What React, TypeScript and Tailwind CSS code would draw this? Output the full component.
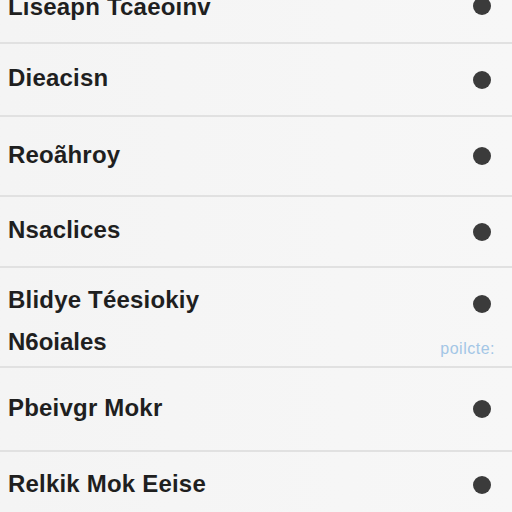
const ROWS = [
  { label: "Liseapn Tcaeoinv", h: "h-[74px]" },
  { label: "Dieacisn", h: "h-[73px]" },
  { label: "Reoãhroy", h: "h-[80px]" },
  { label: "Nsaclices", h: "h-[71px]" },
  { label: "Blidye Téesiokiy", sub: "N6oiales", note: "poilcte:", h: "h-[100px]" },
  { label: "Pbeivgr Mokr", h: "h-[84px]" },
  { label: "Relkik Mok Eeise", h: "h-[66px]" },
];

function Dot() {
  return <span className="block w-[18px] h-[18px] rounded-full bg-[#3b3b3b]" />;
}

export default function App() {
  return (
    <div
      className="w-[512px] h-[512px] overflow-hidden bg-gradient-to-r from-[#f4f4f4] to-[#f7f7f7] text-[#1f1f1f]"
      style={{ fontFamily: '"Liberation Sans", Arial, sans-serif' }}
    >
      <div className="-mt-[30px] flex flex-col">
        {ROWS.map((row, i) => (
          <div
            key={i}
            className={`${row.h} shrink-0 flex items-center pl-2 pr-[21px] ${
              i < ROWS.length - 1 ? "border-b-2 border-[#e1e1e1]" : ""
            }`}
          >
            {row.sub ? (
              <div className="flex-1 flex flex-col gap-[17px] pt-[6px]">
                <div className="flex items-center justify-between">
                  <span className="text-[24px] font-bold tracking-[0.2px] leading-none">
                    {row.label}
                  </span>
                  <span className="mt-[8px]">
                    <Dot />
                  </span>
                </div>
                <div className="flex items-end justify-between">
                  <span className="text-[24px] font-bold leading-none">{row.sub}</span>
                  <span className="text-[16px] text-[#a3c6e6] leading-none -mb-[3px] -mr-[4px] tracking-[0.5px]">
                    {row.note}
                  </span>
                </div>
              </div>
            ) : (
              <div className="flex-1 flex items-center justify-between">
                <span
                  className={`text-[24px] font-bold tracking-[0.2px] leading-none ${
                    i === 0 ? "mt-[2px]" : "-mt-[3px]"
                  }`}
                >
                  {row.label}
                </span>
                <Dot />
              </div>
            )}
          </div>
        ))}
      </div>
    </div>
  );
}
